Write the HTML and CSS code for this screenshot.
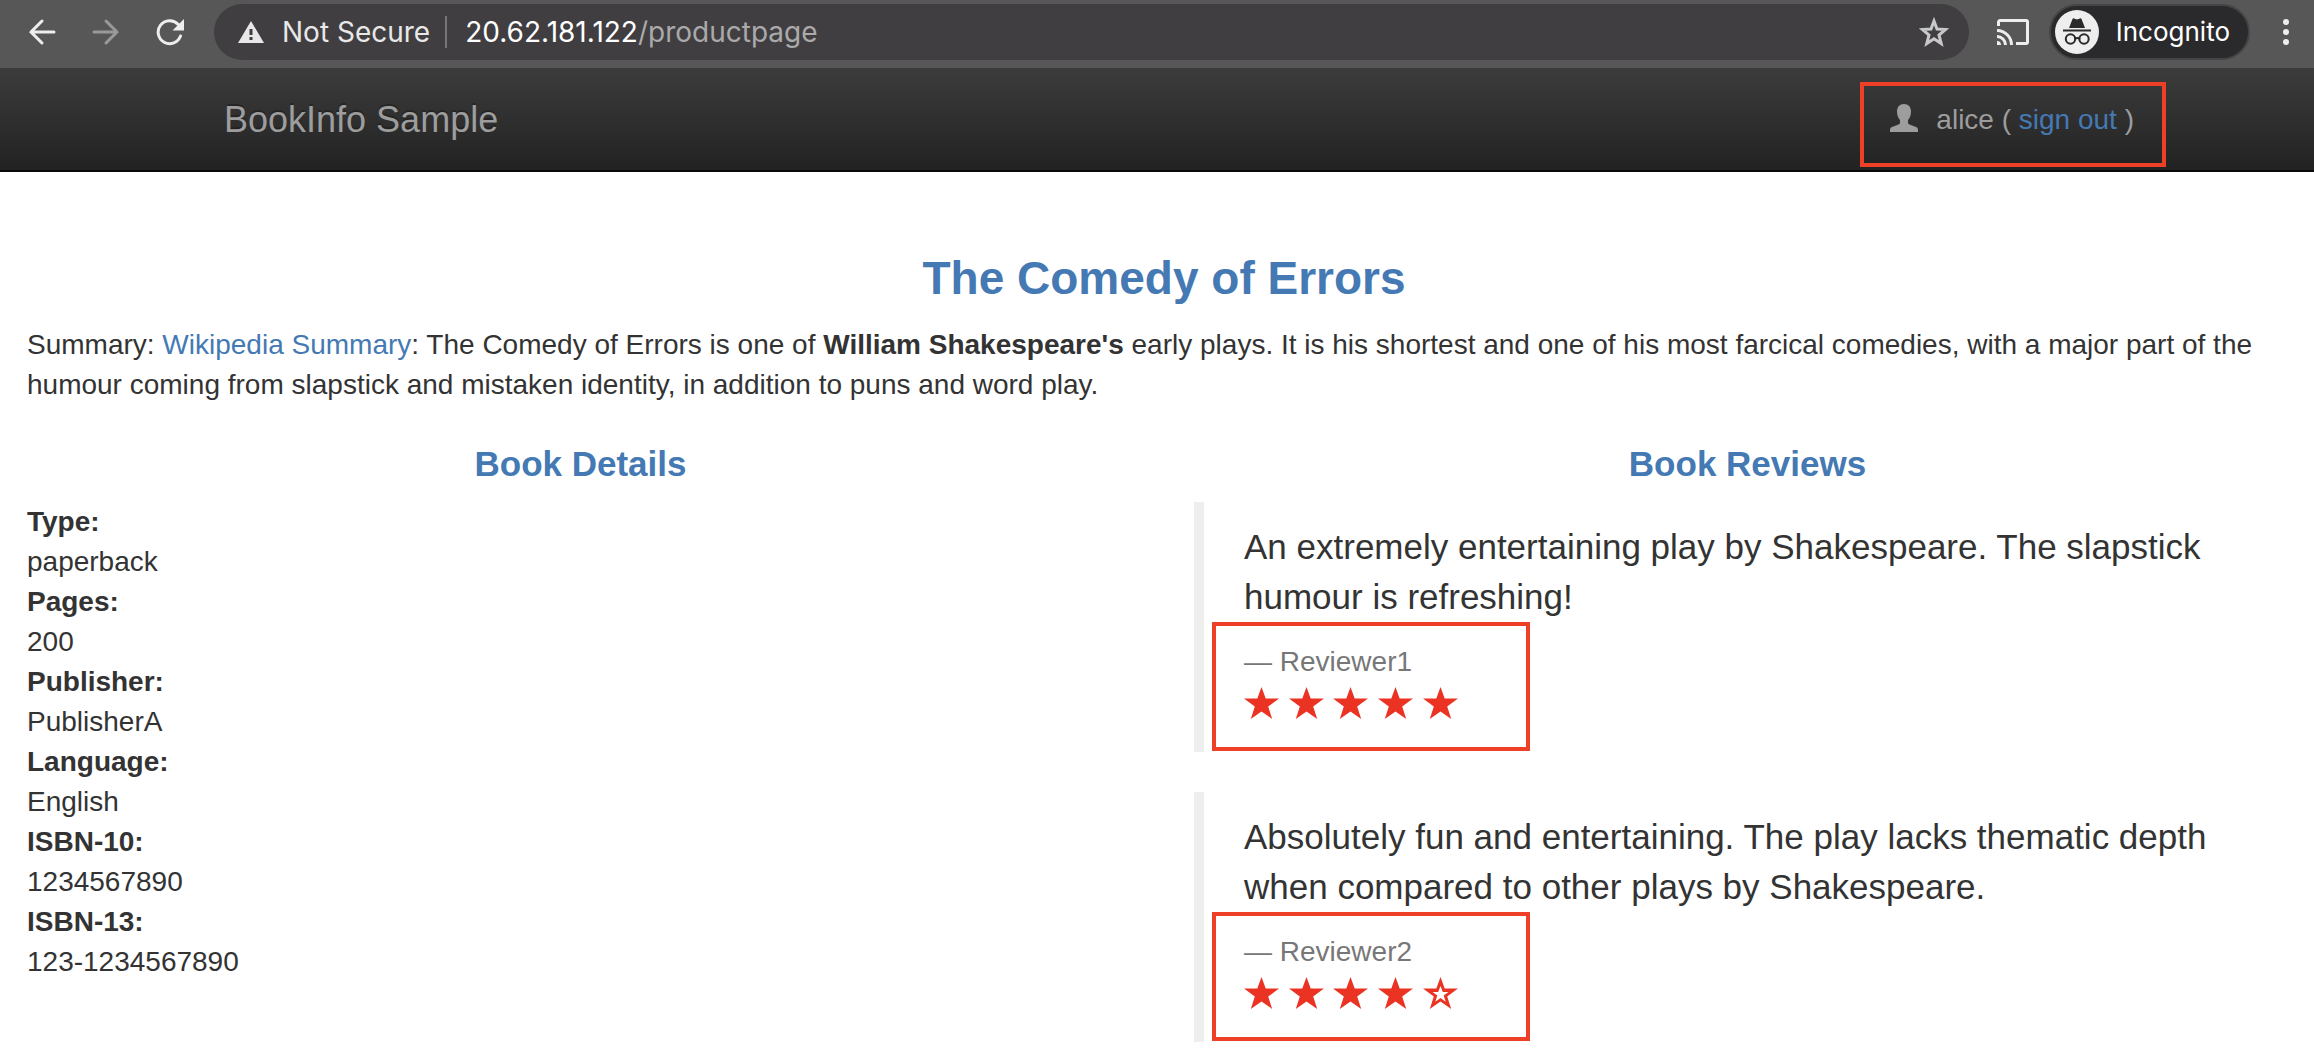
FILE: index.html
```html
<!DOCTYPE html>
<html lang="en">
<head>
<meta charset="utf-8">
<title>Simple Bookstore App</title>
<link rel="stylesheet" href="styles.css">
</head>
<body>
<svg class="symbols" aria-hidden="true">
  <symbol id="star" viewBox="0 0 35 32"><path d="M17.500 0l4.200 11.500H35L24.200 19.600l4 12.400-10.700-7.500L6.800 32l4-12.400L0 11.500h13.300z"/></symbol>
  <symbol id="star-empty" viewBox="0 0 35 32"><path fill-rule="evenodd" d="M17.500 0l4.200 11.500H35L24.200 19.600l4 12.400-10.700-7.500L6.800 32l4-12.400L0 11.500h13.300zM17.500 9l-2.300 6H9.600l4.700 3.600-2 6.200 5.200-3.800 5.200 3.800-2-6.200 4.700-3.600h-5.600z"/></symbol>
</svg>
<div class="browser">
  <div class="nav-buttons">
    <button type="button" aria-label="Back"><svg width="28" height="28" viewBox="0 0 28 28"><path d="M26 14H3M14 3L3 14l11 11"/></svg></button>
    <button type="button" class="dim" aria-label="Forward"><svg width="28" height="28" viewBox="0 0 28 28"><path d="M2 14h23M14 3l11 11-11 11"/></svg></button>
    <button type="button" aria-label="Reload"><svg width="28" height="28" viewBox="0 0 28 28"><path d="M24.500 18A11.500 11.500 0 1 1 22 6.200"/><path class="solid" d="M28 1v11.500H16.500z"/></svg></button>
  </div>
  <div class="address">
    <svg class="warning" width="26" height="22" viewBox="0 0 26 22"><path fill="#e8e8e8" d="M13 0l13 22H0z"/><path fill="#403e41" d="M11.500 8h3v6h-3zM11.500 16h3v3h-3z"/></svg>
    <span class="not-secure">Not Secure</span>
    <span class="url"><b>20.62.181.122</b>/productpage</span>
    <button type="button" class="bookmark" aria-label="Bookmark"><svg width="30" height="30" viewBox="0 0 30 30"><path d="M15 4l3 8 8.500.5-6.500 5.500 2.200 8.500L15 21.700l-7.200 4.800L10 18l-6.500-5.500L12 12z"/></svg></button>
  </div>
  <button type="button" class="cast" aria-label="Cast"><svg width="32" height="26" viewBox="0 0 32 26"><path d="M1.500 7V3A1.500 1.500 0 0 1 3 1.500h26A1.500 1.500 0 0 1 30.500 3v20a1.500 1.500 0 0 1-1.500 1.500H19M0 11.500A14.500 14.500 0 0 1 14.500 26M0 17.500A8.500 8.500 0 0 1 8.500 26"/><path class="solid" d="M0 22a4 4 0 0 1 4 4H0z"/></svg></button>
  <button type="button" class="incognito">
    <svg width="44" height="44" viewBox="0 0 44 44"><circle cx="22" cy="22" r="22" fill="#eee"/><path fill="#2a2a2d" d="M14 18l3.500-9q.5-1 1.500-.5l3 1 3-1q1-.5 1.500.5l3.500 9zM8 19.500h28v2H8z"/><g fill="none" stroke="#2a2a2d" stroke-width="2"><circle cx="15.500" cy="29" r="4.700"/><circle cx="29" cy="29" r="4.700"/><path d="M20 28.500q2.200-1 4.500 0"/></g></svg>
    <span>Incognito</span>
  </button>
  <button type="button" class="menu" aria-label="Menu"><svg width="8" height="28" viewBox="0 0 8 28"><circle cx="4" cy="4" r="3"/><circle cx="4" cy="14" r="3"/><circle cx="4" cy="24" r="3"/></svg></button>
</div>

<nav class="navbar">
  <a class="brand" href="#">BookInfo Sample</a>
  <p class="user">
    <svg width="28" height="28" viewBox="0 0 28 28"><path d="M14 0c4.500 0 7 3 7 7.500 0 3.500-1 6.500-3 8.500v2.500c0 1 .5 1.500 1.500 2L26 23c1.500.7 2 1.500 2 3v2H0v-2c0-1.500.5-2.300 2-3l6.500-2.500c1-.5 1.500-1 1.500-2V16c-2-2-3-5-3-8.500C7 3 9.500 0 14 0z"/></svg>
    <span>alice ( <a href="#">sign out</a> )</span>
  </p>
</nav>

<main class="page">
  <h3>The Comedy of Errors</h3>
  <p class="summary">Summary: <a href="#">Wikipedia Summary</a>: The Comedy of Errors is one of <b>William Shakespeare's</b> early plays. It is his shortest and one of his most farcical comedies, with a major part of the humour coming from slapstick and mistaken identity, in addition to puns and word play.</p>
  <div class="columns">
    <section>
      <h4>Book Details</h4>
      <dl>
        <dt>Type:</dt><dd>paperback</dd>
        <dt>Pages:</dt><dd>200</dd>
        <dt>Publisher:</dt><dd>PublisherA</dd>
        <dt>Language:</dt><dd>English</dd>
        <dt>ISBN-10:</dt><dd>1234567890</dd>
        <dt>ISBN-13:</dt><dd>123-1234567890</dd>
      </dl>
    </section>
    <section>
      <h4>Book Reviews</h4>
      <blockquote>
        <p>An extremely entertaining play by Shakespeare. The slapstick humour is refreshing!</p>
        <small>— Reviewer1</small>
        <div class="stars">
          <svg><use href="#star"/></svg>
          <svg><use href="#star"/></svg>
          <svg><use href="#star"/></svg>
          <svg><use href="#star"/></svg>
          <svg><use href="#star"/></svg>
        </div>
      </blockquote>
      <blockquote>
        <p>Absolutely fun and entertaining. The play lacks thematic depth when compared to other plays by Shakespeare.</p>
        <small>— Reviewer2</small>
        <div class="stars">
          <svg><use href="#star"/></svg>
          <svg><use href="#star"/></svg>
          <svg><use href="#star"/></svg>
          <svg><use href="#star"/></svg>
          <svg><use href="#star-empty"/></svg>
        </div>
      </blockquote>
    </section>
  </div>
</main>
</body>
</html>
```
FILE: styles.css
```css
*, *::after { box-sizing: border-box; }

body {
  margin: 0;
  background: #fff;
  color: #333;
  font: 28px/40px "Liberation Sans", Arial, sans-serif;
}

a { color: #4479b3; text-decoration: none; }
.symbols { display: none; }
svg { flex: none; }

/* Browser toolbar */
.browser {
  display: flex;
  align-items: center;
  height: 68px;
  padding: 0 24px 4px 28px;
  background: #575757;
  font: 26px/32px Inter, sans-serif;
}

.browser button {
  display: flex;
  align-items: center;
  padding: 0;
  border: 0;
  background: none;
  color: #eee;
  font: inherit;
}

.browser button svg {
  fill: none;
  stroke: currentColor;
  stroke-linecap: round;
  stroke-width: 3;
}

.browser button .solid { fill: currentColor; stroke: none; }
.nav-buttons { display: flex; gap: 36px; }
.nav-buttons .dim { color: #999; }

.address {
  display: flex;
  flex: 1;
  align-items: center;
  height: 56px;
  margin: 0 28px 0 30px;
  padding: 0 20px 0 24px;
  border-radius: 28px;
  background: #403e41;
  font-size: 28px;
}

.not-secure {
  margin-left: 18px;
  padding-right: 15px;
  border-right: 2px solid #77757a;
  color: #e8e8e8;
}

.url { flex: 1; margin-left: 18px; color: #aaa; }
.url b { color: #fff; font-weight: 400; }
.browser .bookmark { color: #c8c8c8; }
.browser .cast svg { stroke-linecap: butt; }

.browser .incognito {
  gap: 17px;
  height: 56px;
  margin: 0 32px 0 20px;
  padding: 0 18px 0 4px;
  border: 2px solid #454547;
  border-radius: 28px;
  background: #2a2a2d;
  color: #fff;
}

.browser .incognito > svg { stroke: none; }
.browser .menu svg { fill: currentColor; stroke: none; }

/* Site navigation */
.navbar {
  position: relative;
  display: flex;
  align-items: center;
  justify-content: space-between;
  height: 104px;
  padding: 2px 180px 0 224px;
  border-bottom: 2px solid #080808;
  background: linear-gradient(#3c3c3c, #222);
  color: #9d9d9d;
}

.brand { color: #9d9d9d; font-size: 36px; text-shadow: 0 -2px 0 rgba(0, 0, 0, .25); }
.user { display: flex; gap: 18px; margin: 0; }
.user svg { margin-top: 4px; fill: currentColor; }

/* Red call-out frames */
.user::after,
blockquote::after {
  position: absolute;
  border: 4px solid #ee4027;
  content: "";
}

.user::after { top: 14px; right: 148px; width: 306px; height: 85px; }
blockquote::after { bottom: 1px; left: 8px; width: 318px; height: 129px; }

/* Page content */
.page { padding: 80px 13px 0 27px; }

h3, h4 { margin: 0; color: #4479b3; text-align: center; }
h3 { margin-bottom: 20px; font-size: 46px; line-height: 53px; }
h4 { margin-bottom: 16px; font-size: 35px; line-height: 44px; }
.summary { margin: 0 0 37px; }

.columns { display: grid; grid-template-columns: 1fr 1fr; gap: 60px; }
dl, dd { margin: 0; }
dt { font-weight: 700; }

blockquote {
  position: relative;
  margin: 0 0 40px;
  padding: 20px 40px;
  border-left: 10px solid #eee;
  font-size: 35px;
  line-height: 50px;
}

blockquote p { margin: 0 0 20px; }
blockquote small { display: block; color: #777; font-size: 28px; line-height: 40px; }
.stars { height: 50px; }
.stars svg { width: 35px; height: 32px; fill: #eb3323; }
```
